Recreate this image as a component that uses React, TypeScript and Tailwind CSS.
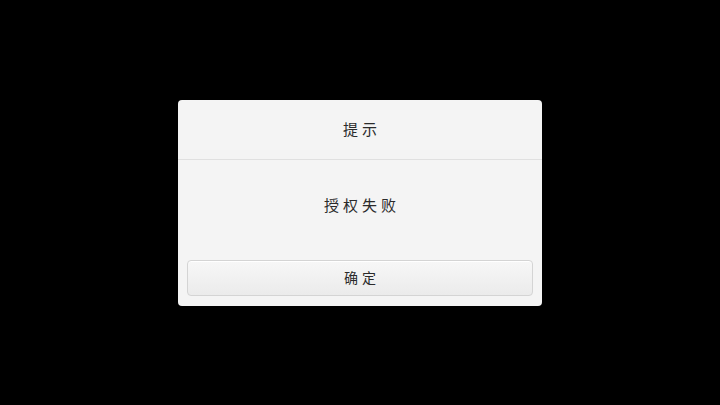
export default function App() {
  return (
    <div className="flex h-[405px] w-[720px] items-center justify-center bg-black">
      <div
        className="flex h-[206px] w-[364px] flex-col rounded-[4px] bg-[#f4f4f4] text-[#2b2b2b]"
        style={{ fontFamily: '"Noto Sans CJK SC", "Noto Sans", sans-serif' }}
      >
        <div className="flex h-[59px] items-center justify-center pl-[4px] text-[15px] tracking-[4px]">
          提示
        </div>
        <div className="h-px bg-[#e0e0e0]" />
        <div className="flex h-[92px] items-center justify-center pl-[4px] text-[15px] tracking-[4px]">
          授权失败
        </div>
        <div className="mx-[9px] mt-[8px] flex h-[36px] items-center justify-center rounded-[4px] border border-[#d4d4d4] bg-gradient-to-b from-[#f7f7f7] to-[#ebebeb] pl-[4px] text-[14px] tracking-[4px] shadow-[inset_0_1px_0_#ffffff]">
          确定
        </div>
      </div>
    </div>
  )
}
